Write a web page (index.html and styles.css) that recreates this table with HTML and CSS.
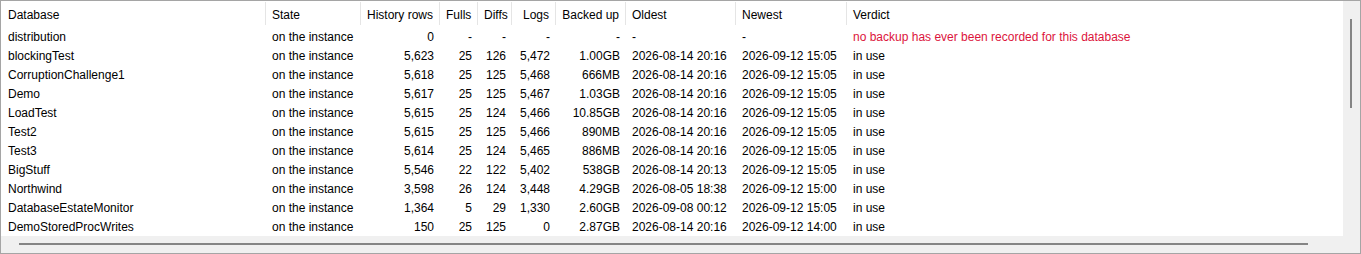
FILE: index.html
```html
<!DOCTYPE html>
<html>
  <head>
    <title>Backup history</title>
    <link rel="stylesheet" href="styles.css">
  </head>
  <body>
    <div class="listview">
      <div class="view">
        <table class="grid">
          <colgroup>
            <col class="c-db">
            <col class="c-state">
            <col class="c-rows">
            <col class="c-fulls">
            <col class="c-diffs">
            <col class="c-logs">
            <col class="c-size">
            <col class="c-oldest">
            <col class="c-newest">
            <col class="c-verdict">
          </colgroup>
          <thead>
            <tr>
              <th class="first">Database</th>
              <th>State</th>
              <th class="num">History rows</th>
              <th class="num">Fulls</th>
              <th class="num">Diffs</th>
              <th class="num">Logs</th>
              <th class="num">Backed up</th>
              <th>Oldest</th>
              <th>Newest</th>
              <th class="last">Verdict</th>
            </tr>
          </thead>
          <tbody>
            <tr>
              <td class="first">distribution</td><td>on the instance</td>
              <td class="num">0</td><td class="num">-</td><td class="num">-</td><td class="num">-</td><td class="num">-</td>
              <td>-</td><td>-</td><td class="warn">no backup has ever been recorded for this database</td>
            </tr>
            <tr>
              <td class="first">blockingTest</td><td>on the instance</td>
              <td class="num">5,623</td><td class="num">25</td><td class="num">126</td><td class="num">5,472</td><td class="num">1.00GB</td>
              <td>2026-08-14 20:16</td><td>2026-09-12 15:05</td><td>in use</td>
            </tr>
            <tr>
              <td class="first">CorruptionChallenge1</td><td>on the instance</td>
              <td class="num">5,618</td><td class="num">25</td><td class="num">125</td><td class="num">5,468</td><td class="num">666MB</td>
              <td>2026-08-14 20:16</td><td>2026-09-12 15:05</td><td>in use</td>
            </tr>
            <tr>
              <td class="first">Demo</td><td>on the instance</td>
              <td class="num">5,617</td><td class="num">25</td><td class="num">125</td><td class="num">5,467</td><td class="num">1.03GB</td>
              <td>2026-08-14 20:16</td><td>2026-09-12 15:05</td><td>in use</td>
            </tr>
            <tr>
              <td class="first">LoadTest</td><td>on the instance</td>
              <td class="num">5,615</td><td class="num">25</td><td class="num">124</td><td class="num">5,466</td><td class="num">10.85GB</td>
              <td>2026-08-14 20:16</td><td>2026-09-12 15:05</td><td>in use</td>
            </tr>
            <tr>
              <td class="first">Test2</td><td>on the instance</td>
              <td class="num">5,615</td><td class="num">25</td><td class="num">125</td><td class="num">5,466</td><td class="num">890MB</td>
              <td>2026-08-14 20:16</td><td>2026-09-12 15:05</td><td>in use</td>
            </tr>
            <tr>
              <td class="first">Test3</td><td>on the instance</td>
              <td class="num">5,614</td><td class="num">25</td><td class="num">124</td><td class="num">5,465</td><td class="num">886MB</td>
              <td>2026-08-14 20:16</td><td>2026-09-12 15:05</td><td>in use</td>
            </tr>
            <tr>
              <td class="first">BigStuff</td><td>on the instance</td>
              <td class="num">5,546</td><td class="num">22</td><td class="num">122</td><td class="num">5,402</td><td class="num">538GB</td>
              <td>2026-08-14 20:13</td><td>2026-09-12 15:05</td><td>in use</td>
            </tr>
            <tr>
              <td class="first">Northwind</td><td>on the instance</td>
              <td class="num">3,598</td><td class="num">26</td><td class="num">124</td><td class="num">3,448</td><td class="num">4.29GB</td>
              <td>2026-08-05 18:38</td><td>2026-09-12 15:00</td><td>in use</td>
            </tr>
            <tr>
              <td class="first">DatabaseEstateMonitor</td><td>on the instance</td>
              <td class="num">1,364</td><td class="num">5</td><td class="num">29</td><td class="num">1,330</td><td class="num">2.60GB</td>
              <td>2026-09-08 00:12</td><td>2026-09-12 15:05</td><td>in use</td>
            </tr>
            <tr>
              <td class="first">DemoStoredProcWrites</td><td>on the instance</td>
              <td class="num">150</td><td class="num">25</td><td class="num">125</td><td class="num">0</td><td class="num">2.87GB</td>
              <td>2026-08-14 20:16</td><td>2026-09-12 14:00</td><td>in use</td>
            </tr>
          </tbody>
        </table>
      </div>
      <div class="vscroll"><div class="vthumb"></div></div>
      <div class="hscroll"><div class="hthumb"></div></div>
    </div>
  </body>
</html>
```

FILE: styles.css
```css
/* page */
body {
  margin: 0;
  background: #fff;
  font-family: "Liberation Sans", Arial, sans-serif;
  font-size: 12px;
  color: #000;
}

/* list view frame */
.listview {
  display: grid;
  grid-template-columns: 1342px 17px;
  grid-template-rows: 235px 17px;
  width: 1359px;
  height: 252px;
  border: 1px solid #a5a5a5;
}
.view {
  grid-column: 1;
  grid-row: 1;
  overflow: hidden;
  background: #fff;
}

/* scrollbars (collapsed, thin thumb) */
.vscroll {
  grid-column: 2;
  grid-row: 1 / span 2;
  background: #f0f0f0;
  padding: 18px 0 0 7px;
}
.vthumb {
  width: 2px;
  height: 89px;
  background: #858585;
}
.hscroll {
  grid-column: 1;
  grid-row: 2;
  background: #f0f0f0;
  padding: 7px 0 0 18px;
}
.hthumb {
  width: 1289px;
  height: 2px;
  background: #858585;
}

/* grid */
.grid {
  table-layout: fixed;
  border-collapse: collapse;
  width: 1342px;
  font: inherit;
}
.c-db { width: 265px; }
.c-state { width: 95px; }
.c-rows { width: 79px; }
.c-fulls { width: 38px; }
.c-diffs { width: 34px; }
.c-logs { width: 44px; }
.c-size { width: 70px; }
.c-oldest { width: 110px; }
.c-newest { width: 111px; }

.grid th,.grid td {
  padding: 0 6px;
  white-space: nowrap;
  overflow: hidden;
  text-align: left;
  font-weight: normal;
  box-sizing: border-box;
}
.grid th {
  height: 26px;
  line-height: 23px;
  padding-top: 3px;
  background: linear-gradient(#e5e5e5, #e5e5e5) right 1px / 1px 23px no-repeat;
  padding-right: 7px;
}
.grid th.last {
  background: none;
}
.grid td {
  height: 19px;
  line-height: 17px;
  padding-top: 2px;
}
.grid .first {
  padding-left: 7px;
}
.grid .num {
  text-align: right;
}
.grid td.warn {
  color: #dc143c;
}
```
